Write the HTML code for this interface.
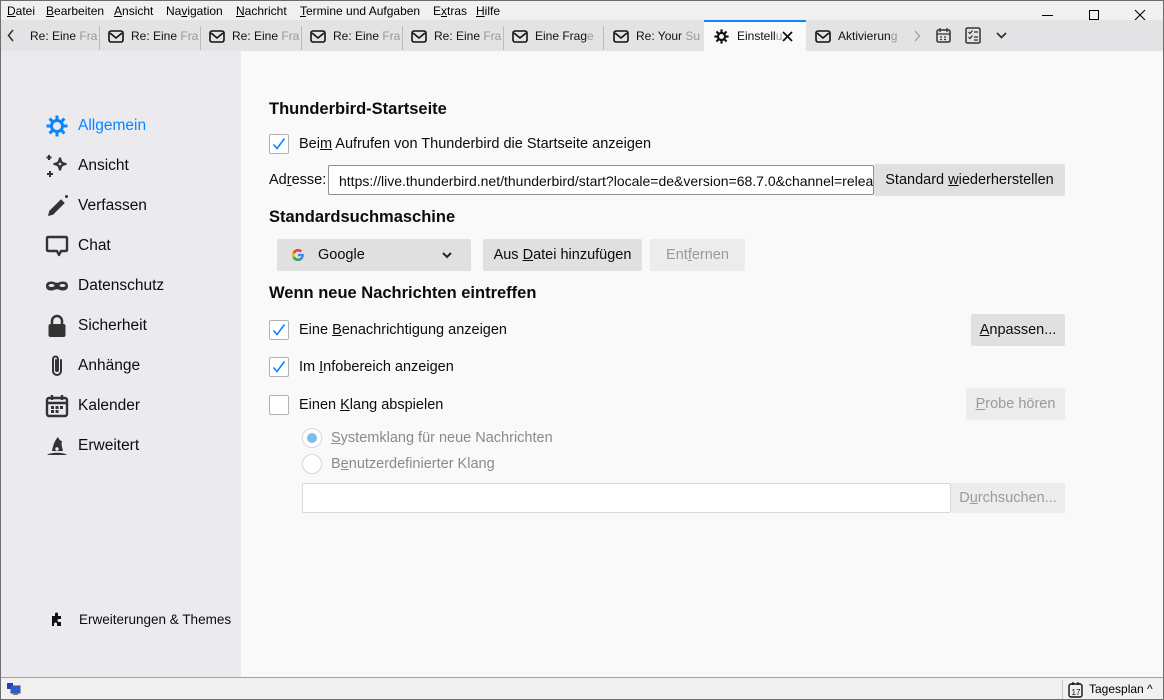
<!DOCTYPE html>
<html><head><meta charset="utf-8"><style>
*{margin:0;padding:0;box-sizing:border-box}
body{width:1164px;height:700px;position:relative;overflow:hidden;font-family:"Segoe UI","Liberation Sans",sans-serif;background:#f0f0f0;color:#0c0c0d}
.a{position:absolute;white-space:nowrap}
#frame{position:absolute;inset:0;border:1px solid #6d6d6d;pointer-events:none;z-index:9}
.menu{font-size:12px;top:4px;color:#000}
.tabbar{position:absolute;left:0;top:20px;width:1164px;height:31px;background:#e3e3e5}
.tab{position:absolute;top:1px;height:31px;font-size:12px;color:#111;line-height:31px}
.sep{position:absolute;top:6px;width:1px;height:24px;background:#bcbcbc}
.fade{color:#999}
.side{position:absolute;left:0;top:51px;width:241px;height:626px;background:#ebebef}
.main{position:absolute;left:241px;top:51px;width:922px;height:626px;background:#f9f9fa}
.si{position:absolute;left:78px;font-size:15.5px;color:#0c0c0d}
.ic{position:absolute;left:45px;width:24px;height:24px}
h2{position:absolute;font-size:16.5px;font-weight:bold;left:269px;white-space:nowrap}
.t{position:absolute;font-size:14.5px;white-space:nowrap}
.cb{position:absolute;left:269px;width:20px;height:20px;border:1px solid #b1b1b3;background:#fff;border-radius:2px}
.btn{position:absolute;background:#e0e0e1;border-radius:2px;font-size:14.5px;text-align:center;white-space:nowrap}
.dis{background:#ececed;color:#9a9a9c}
u{text-decoration:underline}
.status{position:absolute;left:0;top:677px;width:1164px;height:23px;background:#f0f0f0;border-top:1px solid #a0a0a0}
</style></head><body>
<div id="frame"></div>
<div class="a menu" style="left:7px"><u>D</u>atei</div>
<div class="a menu" style="left:46px"><u>B</u>earbeiten</div>
<div class="a menu" style="left:114px"><u>A</u>nsicht</div>
<div class="a menu" style="left:166px">Na<u>v</u>igation</div>
<div class="a menu" style="left:236px"><u>N</u>achricht</div>
<div class="a menu" style="left:300px"><u>T</u>ermine und Aufgaben</div>
<div class="a menu" style="left:433px">E<u>x</u>tras</div>
<div class="a menu" style="left:476px"><u>H</u>ilfe</div>
<div class="a" style="left:1042px;top:15px;width:11px;height:1px;background:#000"></div>
<div class="a" style="left:1089px;top:10px;width:10px;height:10px;border:1px solid #000"></div>
<svg class="a" style="left:1134px;top:9px" width="12" height="12"><path d="M1 1l10 10M11 1L1 11" stroke="#000" stroke-width="1.1"/></svg>

<div class="tabbar">
<svg class="a" style="left:7px;top:9px" width="8" height="13"><path d="M6 1L1.5 6.5 6 12" fill="none" stroke="#333" stroke-width="1.6"/></svg>
<div class="tab" style="left:30px">Re: Eine <span class="fade">Fra</span></div>
<div class="sep" style="left:99px"></div>
<svg class="a" style="left:108px;top:10px" width="16" height="13"><rect x="1" y="1" width="14" height="11" rx="2" fill="none" stroke="#111" stroke-width="1.6"/><path d="M2 3l6 5 6-5" fill="none" stroke="#111" stroke-width="1.6"/></svg>
<div class="tab" style="left:131px">Re: Eine <span class="fade">Fra</span></div>
<div class="sep" style="left:200px"></div>
<svg class="a" style="left:209px;top:10px" width="16" height="13"><rect x="1" y="1" width="14" height="11" rx="2" fill="none" stroke="#111" stroke-width="1.6"/><path d="M2 3l6 5 6-5" fill="none" stroke="#111" stroke-width="1.6"/></svg>
<div class="tab" style="left:232px">Re: Eine <span class="fade">Fra</span></div>
<div class="sep" style="left:301px"></div>
<svg class="a" style="left:310px;top:10px" width="16" height="13"><rect x="1" y="1" width="14" height="11" rx="2" fill="none" stroke="#111" stroke-width="1.6"/><path d="M2 3l6 5 6-5" fill="none" stroke="#111" stroke-width="1.6"/></svg>
<div class="tab" style="left:333px">Re: Eine <span class="fade">Fra</span></div>
<div class="sep" style="left:402px"></div>
<svg class="a" style="left:411px;top:10px" width="16" height="13"><rect x="1" y="1" width="14" height="11" rx="2" fill="none" stroke="#111" stroke-width="1.6"/><path d="M2 3l6 5 6-5" fill="none" stroke="#111" stroke-width="1.6"/></svg>
<div class="tab" style="left:434px">Re: Eine <span class="fade">Fra</span></div>
<div class="sep" style="left:503px"></div>
<svg class="a" style="left:512px;top:10px" width="16" height="13"><rect x="1" y="1" width="14" height="11" rx="2" fill="none" stroke="#111" stroke-width="1.6"/><path d="M2 3l6 5 6-5" fill="none" stroke="#111" stroke-width="1.6"/></svg>
<div class="tab" style="left:535px">Eine Frag<span class="fade">e</span></div>
<div class="sep" style="left:603px"></div>
<svg class="a" style="left:613px;top:10px" width="16" height="13"><rect x="1" y="1" width="14" height="11" rx="2" fill="none" stroke="#111" stroke-width="1.6"/><path d="M2 3l6 5 6-5" fill="none" stroke="#111" stroke-width="1.6"/></svg>
<div class="tab" style="left:636px">Re: Your <span class="fade">Su</span></div>
<div class="a" style="left:704px;top:0;width:102px;height:31px;background:#f9f9fa;border-top:2px solid #0a84ff"></div>
<svg class="a" style="left:713px;top:8px" width="17" height="17" viewBox="0 0 24 24"><path d="M12 2v4M12 18v4M2 12h4M18 12h4M4.9 4.9l2.8 2.8M16.3 16.3l2.8 2.8M4.9 19.1l2.8-2.8M16.3 7.7l2.8-2.8" stroke="#111" stroke-width="3"/><circle cx="12" cy="12" r="5" fill="none" stroke="#111" stroke-width="3"/></svg>
<div class="tab" style="left:737px">Einstell<span class="fade">u</span></div>
<svg class="a" style="left:782px;top:11px" width="11" height="11"><path d="M1 1l9 9M10 1L1 10" stroke="#111" stroke-width="1.8"/></svg>
<svg class="a" style="left:815px;top:10px" width="16" height="13"><rect x="1" y="1" width="14" height="11" rx="2" fill="none" stroke="#111" stroke-width="1.6"/><path d="M2 3l6 5 6-5" fill="none" stroke="#111" stroke-width="1.6"/></svg>
<div class="tab" style="left:838px">Aktivierun<span class="fade">g</span></div>
<svg class="a" style="left:914px;top:10px" width="7" height="12"><path d="M1 1l4.5 5L1 11" fill="none" stroke="#aaa" stroke-width="1.6"/></svg>
<svg class="a" style="left:936px;top:7px" width="15" height="16"><rect x="1" y="3" width="13" height="12" rx="1.5" fill="none" stroke="#333" stroke-width="1.5"/><path d="M4 1v4M11 1v4M1 7h13M4 10h2M8 10h2M4 12.5h2M8 12.5h2" stroke="#333" stroke-width="1.3"/></svg>
<svg class="a" style="left:965px;top:7px" width="16" height="17"><rect x="1" y="1" width="14" height="15" rx="1.5" fill="none" stroke="#333" stroke-width="1.5"/><path d="M3.5 5l1.5 1.5 2.5-3M9 5h4M3.5 10l1.5 1.5 2.5-3M9 10h4M9 13h4" fill="none" stroke="#333" stroke-width="1.2"/></svg>
<svg class="a" style="left:996px;top:12px" width="11" height="7"><path d="M1 1l4.5 4.5L10 1" fill="none" stroke="#333" stroke-width="1.8"/></svg>
</div>

<div class="side">
<svg class="ic" style="top:63px" viewBox="0 0 24 24"><path d="M12 1.5v4M12 18.5v4M1.5 12h4M18.5 12h4M4.6 4.6l2.8 2.8M16.6 16.6l2.8 2.8M4.6 19.4l2.8-2.8M16.6 7.4l2.8-2.8" stroke="#0a84ff" stroke-width="3"/><circle cx="12" cy="12" r="5.5" fill="none" stroke="#0a84ff" stroke-width="3"/></svg>
<div class="si" style="top:66px;color:#0a84ff">Allgemein</div>
<svg class="ic" style="top:103px" viewBox="0 0 24 24"><path d="M15 4.5c.8 3.8 1.8 4.8 5.5 5.5-3.7.7-4.7 1.7-5.5 5.5-.8-3.8-1.8-4.8-5.5-5.5 3.7-.7 4.7-1.7 5.5-5.5z" fill="none" stroke="#333" stroke-width="2.4" stroke-linejoin="round"/><path d="M4 1v5M1.5 3.5h5M5 17v6M2 20h6" stroke="#333" stroke-width="2"/></svg>
<div class="si" style="top:106px">Ansicht</div>
<svg class="ic" style="top:143px" viewBox="0 0 24 24"><path d="M3 22l1.2-5L16 5.2l3.8 3.8L8 20.8z" fill="#333"/><circle cx="21.5" cy="2.5" r="1.5" fill="#333"/></svg>
<div class="si" style="top:146px">Verfassen</div>
<svg class="ic" style="top:183px" viewBox="0 0 24 24"><path d="M3 3h18a1 1 0 011 1v12a1 1 0 01-1 1h-5l-2 4-2-4H3a1 1 0 01-1-1V4a1 1 0 011-1z" fill="none" stroke="#333" stroke-width="2.4" stroke-linejoin="round"/></svg>
<div class="si" style="top:186px">Chat</div>
<svg class="ic" style="top:223px" viewBox="0 0 24 24"><path d="M1 12c0-3 2-4.5 5-4.5 3 0 4 1.3 6 1.3s3-1.3 6-1.3 5 1.5 5 4.5-2 4.5-5 4.5-4-1.3-6-1.3-3 1.3-6 1.3-5-1.5-5-4.5z" fill="#333"/><ellipse cx="6.5" cy="11.5" rx="3" ry="1.5" fill="#ebebef"/><ellipse cx="17.5" cy="11.5" rx="3" ry="1.5" fill="#ebebef"/></svg>
<div class="si" style="top:226px">Datenschutz</div>
<svg class="ic" style="top:263px" viewBox="0 0 24 24"><path d="M7 11V7a5 5 0 0110 0v4" fill="none" stroke="#333" stroke-width="2.5"/><rect x="3.5" y="10" width="17" height="13" rx="2" fill="#333"/></svg>
<div class="si" style="top:266px">Sicherheit</div>
<svg class="ic" style="top:303px" viewBox="0 0 24 24"><path d="M16 6v11a4 4 0 01-8 0V5a2.5 2.5 0 015 0v11a1 1 0 01-2 0V6" fill="none" stroke="#333" stroke-width="2" stroke-linecap="round"/></svg>
<div class="si" style="top:306px">Anhänge</div>
<svg class="ic" style="top:343px" viewBox="0 0 24 24"><rect x="2" y="4" width="20" height="18" rx="2" fill="none" stroke="#333" stroke-width="2.4"/><path d="M7 1v5M17 1v5M2 9h20" stroke="#333" stroke-width="2.4"/><path d="M6 12h3v3H6zM10.5 12h3v3h-3zM15 12h3v3h-3zM6 16h3v3H6zM10.5 16h3v3h-3z" fill="#333"/></svg>
<div class="si" style="top:346px">Kalender</div>
<svg class="ic" style="top:383px" viewBox="0 0 24 24"><path d="M13 3c-3 3-5 8-6 14h11c-1-4-2-7-1-10-2 0-3-2-4-4z" fill="#333"/><path d="M2 21c3-3 17-3 20 0z" fill="#333"/><circle cx="12" cy="15" r="1.7" fill="#ebebef"/></svg>
<div class="si" style="top:386px">Erweitert</div>
<svg class="a" style="left:50px;top:561px" width="14" height="15" viewBox="0 0 14 15"><path d="M2 4h3V2a1.5 1.5 0 013 0v2h3v3H9a1.5 1.5 0 000 3h2v4H7v-2a1.5 1.5 0 00-3 0v2H2z" fill="#111"/></svg>
<div class="a" style="left:79px;top:561px;font-size:13.5px">Erweiterungen &amp; Themes</div>
</div>

<div class="main"></div>
<h2 style="top:100px">Thunderbird-Startseite</h2>
<div class="cb" style="top:134px"></div>
<svg class="a" style="left:272px;top:137px" width="14" height="14"><path d="M1.5 7.5l3.5 4 7.5-10" fill="none" stroke="#0a84ff" stroke-width="1.6"/></svg>
<div class="t" style="left:299px;top:136px">Bei<u>m</u> Aufrufen von Thunderbird die Startseite anzeigen</div>
<div class="t" style="left:269px;top:172px">Ad<u>r</u>esse:</div>
<div class="a" style="left:328px;top:165px;width:546px;height:30px;background:#fff;border:1px solid #8f8f9d;border-radius:2px;overflow:hidden;font-size:14px;padding:7px 0 0 10px">https://live.thunderbird.net/thunderbird/start?locale=de&amp;version=68.7.0&amp;channel=release</div>
<div class="btn" style="left:874px;top:164px;width:191px;height:32px;line-height:33px">Standard <u>w</u>iederherstellen</div>
<h2 style="top:208px">Standardsuchmaschine</h2>
<div class="btn" style="left:277px;top:239px;width:194px;height:32px"></div>
<svg class="a" style="left:291px;top:248px" width="14" height="14" viewBox="0 0 48 48"><path d="M43.6 20H24v8.4h11.3C34.2 33 30 36 24 36c-6.6 0-12-5.4-12-12s5.4-12 12-12c3 0 5.8 1.1 7.9 3l6-6C34.3 5.7 29.4 3.5 24 3.5 12.7 3.5 3.5 12.7 3.5 24S12.7 44.5 24 44.5c10.6 0 20-7.7 20-20.5 0-1.3-.1-2.7-.4-4z" fill="#4285f4"/><path d="M6 14.7l6.9 5C14.7 15.2 19 12 24 12c3 0 5.8 1.1 7.9 3l6-6C34.3 5.7 29.4 3.5 24 3.5 16.1 3.5 9.4 8 6 14.7z" fill="#ea4335"/><path d="M24 44.5c5.3 0 10.1-1.8 13.8-5l-6.6-5.5C29.3 35.3 26.8 36 24 36c-5.9 0-10.1-3-11.3-7.6l-6.9 5.3C9.2 40.2 16 44.5 24 44.5z" fill="#34a853"/><path d="M6 14.7C4.4 17.5 3.5 20.6 3.5 24s.9 6.6 2.3 9.7l6.9-5.3c-.5-1.4-.7-2.9-.7-4.4s.3-3 .9-4.3z" fill="#fbbc05"/></svg>
<div class="t" style="left:318px;top:247px">Google</div>
<svg class="a" style="left:442px;top:252px" width="10" height="7"><path d="M1 1l4 4 4-4" fill="none" stroke="#222" stroke-width="2"/></svg>
<div class="btn" style="left:483px;top:239px;width:159px;height:32px;line-height:33px">Aus <u>D</u>atei hinzufügen</div>
<div class="btn dis" style="left:650px;top:239px;width:95px;height:32px;line-height:33px">Ent<u>f</u>ernen</div>
<h2 style="top:284px">Wenn neue Nachrichten eintreffen</h2>
<div class="cb" style="top:320px"></div>
<svg class="a" style="left:272px;top:323px" width="14" height="14"><path d="M1.5 7.5l3.5 4 7.5-10" fill="none" stroke="#0a84ff" stroke-width="1.6"/></svg>
<div class="t" style="left:299px;top:322px">Eine <u>B</u>enachrichtigung anzeigen</div>
<div class="btn" style="left:971px;top:314px;width:94px;height:32px;line-height:33px"><u>A</u>npassen...</div>
<div class="cb" style="top:357px"></div>
<svg class="a" style="left:272px;top:360px" width="14" height="14"><path d="M1.5 7.5l3.5 4 7.5-10" fill="none" stroke="#0a84ff" stroke-width="1.6"/></svg>
<div class="t" style="left:299px;top:359px">Im <u>I</u>nfobereich anzeigen</div>
<div class="cb" style="top:395px"></div>
<div class="t" style="left:299px;top:397px">Einen <u>K</u>lang abspielen</div>
<div class="btn dis" style="left:966px;top:388px;width:99px;height:32px;line-height:33px"><u>P</u>robe hören</div>
<div class="a" style="left:302px;top:428px;width:20px;height:20px;border-radius:50%;border:1px solid #d7d7db;background:#fff"></div>
<div class="a" style="left:307px;top:433px;width:10px;height:10px;border-radius:50%;background:#7fbde8"></div>
<div class="t" style="left:331px;top:430px;color:#8a8a8c"><u>S</u>ystemklang für neue Nachrichten</div>
<div class="a" style="left:302px;top:454px;width:20px;height:20px;border-radius:50%;border:1px solid #d7d7db;background:#fff"></div>
<div class="t" style="left:331px;top:456px;color:#8a8a8c">B<u>e</u>nutzerdefinierter Klang</div>
<div class="a" style="left:302px;top:483px;width:649px;height:30px;background:#fff;border:1px solid #d7d7db;border-radius:2px"></div>
<div class="btn dis" style="left:951px;top:483px;width:114px;height:30px;line-height:31px">D<u>u</u>rchsuchen...</div>

<div class="status">
<svg class="a" style="left:6px;top:4px" width="16" height="14"><rect x="1" y="1" width="6" height="6" fill="#1a3fd0"/><rect x="5" y="4" width="9" height="7" fill="#2b5be0" stroke="#555"/><rect x="7" y="11" width="5" height="2" fill="#777"/></svg>
<div class="a" style="left:1062px;top:2px;width:1px;height:20px;background:#c8c8c8"></div>
<svg class="a" style="left:1068px;top:3px" width="16" height="17"><rect x="1" y="3" width="13" height="13" rx="2" fill="none" stroke="#111" stroke-width="1.4"/><path d="M5 1v3M10 1v3" stroke="#111" stroke-width="1.3"/><text x="3.5" y="14" font-size="8" font-family="Liberation Sans" fill="#111">17</text></svg>
<div class="a" style="left:1089px;top:4px;font-size:12px;color:#000">Tagesplan ^</div>
</div>
</body></html>
